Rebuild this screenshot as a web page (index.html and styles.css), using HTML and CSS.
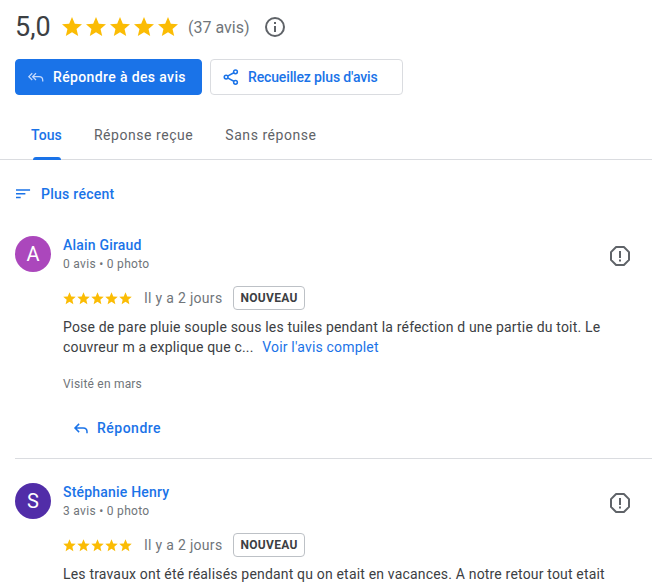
FILE: index.html
```html
<!DOCTYPE html>
<html lang="fr">
<head>
    <meta charset="UTF-8">
    <title>Avis</title>
    <link rel="stylesheet" href="styles.css">
</head>
<body>
    <svg class="defs" width="0" height="0">
        <symbol id="star" viewBox="0 0 24 24"><path d="M12 17.27 18.18 21l-1.64-7.03L22 9.24l-7.19-.61L12 2 9.19 8.63 2 9.24l5.46 4.73L5.82 21z"/></symbol>
        <symbol id="flag" viewBox="0 0 24 24"><path d="M8.1 3h7.8L21 8.1v7.8L15.9 21H8.1L3 15.9V8.1z" fill="none" stroke="currentColor" stroke-width="2" stroke-linejoin="round"/><path d="M11 7h2v7h-2zM11 15.500h2v2h-2z" fill="currentColor"/></symbol>
        <symbol id="reply" viewBox="0 0 24 24"><path d="M9.500 6.500 4 12l5.500 5.500M4.500 12H15c3 0 5 2 5 5v2" fill="none" stroke="currentColor" stroke-width="2"/></symbol>
    </svg>

    <div class="summary">
        <span class="score">5,0</span>
        <span class="stars big">
            <svg><use href="#star"/></svg><svg><use href="#star"/></svg><svg><use href="#star"/></svg><svg><use href="#star"/></svg><svg><use href="#star"/></svg>
        </span>
        <span class="count">(37 avis)</span>
        <svg class="info" viewBox="0 0 24 24"><circle cx="12" cy="12" r="9" fill="none" stroke="currentColor" stroke-width="2"/><path d="M11 11h2v6h-2zM11 7h2v2h-2z" fill="currentColor"/></svg>
    </div>

    <div class="actions">
        <button class="btn primary">
            <svg class="btn-icon" viewBox="0 0 24 24" fill="none" stroke="currentColor" stroke-width="1.700"><path d="M7 7 2.500 11.500 7 16M12 7l-4.500 4.500L12 16M8 11.500h8c3 0 5 2 5 5V18"/></svg>
            Répondre à des avis
        </button>
        <button class="btn outline">
            <svg class="btn-icon" viewBox="0 0 24 24" fill="none" stroke="currentColor" stroke-width="2"><circle cx="18" cy="5" r="2.500"/><circle cx="5.500" cy="12" r="2.500"/><circle cx="18" cy="19" r="2.500"/><path d="m8 10.600 7.800-4.300M8 13.400l7.800 4.300"/></svg>
            Recueillez plus d'avis
        </button>
    </div>

    <div class="tabs">
        <div class="tab active">Tous</div>
        <div class="tab">Réponse reçue</div>
        <div class="tab">Sans réponse</div>
    </div>

    <div class="sort">
        <svg class="sort-icon" viewBox="0 0 16 12" fill="currentColor"><path d="M0 1h15v1.500H0zM0 5h10v1.500H0zM0 9h5v1.500H0z"/></svg>
        Plus récent
    </div>

    <div class="review">
        <div class="author">
            <div class="avatar purple">A</div>
            <div class="author-info">
                <div class="name">Alain Giraud</div>
                <div class="meta">0 avis • 0 photo</div>
            </div>
            <svg class="flag"><use href="#flag"/></svg>
        </div>
        <div class="review-body">
            <div class="rating">
                <span class="stars small">
                    <svg><use href="#star"/></svg><svg><use href="#star"/></svg><svg><use href="#star"/></svg><svg><use href="#star"/></svg><svg><use href="#star"/></svg>
                </span>
                <span class="date">Il y a 2 jours</span>
                <span class="badge">NOUVEAU</span>
            </div>
            <p class="text">Pose de pare pluie souple sous les tuiles pendant la réfection d une partie du toit. Le couvreur m a explique que c... <a class="more">Voir l'avis complet</a></p>
            <div class="visited">Visité en mars</div>
            <div class="reply">
                <svg class="reply-icon"><use href="#reply"/></svg>
                Répondre
            </div>
        </div>
    </div>

    <div class="review">
        <div class="author">
            <div class="avatar indigo">S</div>
            <div class="author-info">
                <div class="name">Stéphanie Henry</div>
                <div class="meta">3 avis • 0 photo</div>
            </div>
            <svg class="flag"><use href="#flag"/></svg>
        </div>
        <div class="review-body">
            <div class="rating">
                <span class="stars small">
                    <svg><use href="#star"/></svg><svg><use href="#star"/></svg><svg><use href="#star"/></svg><svg><use href="#star"/></svg><svg><use href="#star"/></svg>
                </span>
                <span class="date">Il y a 2 jours</span>
                <span class="badge">NOUVEAU</span>
            </div>
            <p class="text">Les travaux ont été réalisés pendant qu on etait en vacances. A notre retour tout etait</p>
        </div>
    </div>
</body>
</html>
```

FILE: styles.css
```css
html, body {
    height: 100%;
    overflow: hidden;
}
body {
    margin: 0;
    font-family: Roboto, "Liberation Sans", sans-serif;
    color: #3c4043;
    background: #fff;
}
.defs {
    position: absolute;
}
.summary {
    display: flex;
    align-items: center;
    height: 30px;
    padding: 12px 0 0 15px;
}
.score {
    font-size: 27px;
    width: 45px;
}
.stars {
    display: flex;
    fill: #fbbc04;
}
.stars.big svg {
    width: 24px;
    height: 24px;
}
.stars.small {
    margin-left: -1px;
}
.stars.small svg {
    width: 15px;
    height: 15px;
    margin-right: -1px;
}
.count {
    font-size: 16px;
    color: #70757a;
    margin-left: 8px;
    width: 62px;
    white-space: nowrap;
}
.info {
    width: 24px;
    height: 24px;
    margin-left: 13px;
    color: #5f6368;
}
.actions {
    display: flex;
    gap: 8px;
    padding: 17px 0 0 15px;
}
.btn {
    display: flex;
    align-items: center;
    height: 36px;
    border-radius: 4px;
    font-family: inherit;
    font-size: 14px;
    font-weight: 500;
    padding: 0;
    box-sizing: border-box;
}
.btn-icon {
    width: 18px;
    height: 18px;
    margin-right: 8px;
}
.primary {
    width: 187px;
    padding-left: 11px;
    background: #1a73e8;
    border: 1px solid #1a73e8;
    color: #fff;
    letter-spacing: 0.37px;
}
.primary .btn-icon {
    color: #c6dafc;
}
.outline {
    width: 193px;
    padding-left: 11px;
    background: #fff;
    border: 1px solid #dadce0;
    color: #1a73e8;
    letter-spacing: -0.14px;
}
.tabs {
    display: flex;
    gap: 32px;
    height: 65px;
    box-sizing: border-box;
    border-bottom: 1px solid #dadce0;
    padding-left: 31px;
}
.tab {
    position: relative;
    font-size: 14px;
    line-height: 80px;
    color: #5f6368;
    letter-spacing: 0.55px;
}
.tab.active {
    color: #1a73e8;
    font-weight: 500;
    letter-spacing: 0.1px;
}
.tab.active::after {
    content: "";
    position: absolute;
    left: 2px;
    right: 1px;
    bottom: -1px;
    height: 3px;
    border-radius: 3px 3px 0 0;
    background: #1a73e8;
}
.sort {
    display: flex;
    align-items: center;
    gap: 10px;
    height: 20px;
    margin: 24px 0 32px 16px;
    font-size: 14px;
    font-weight: 500;
    color: #1a73e8;
    letter-spacing: 0.27px;
}
.sort-icon {
    width: 15px;
    height: 12px;
}
.review {
    margin-left: 15px;
    padding-bottom: 12px;
    border-bottom: 1px solid #dadce0;
    margin-bottom: 24px;
}
.review:last-child {
    border-bottom: 0;
    padding-bottom: 0;
    margin-bottom: 0;
}
.author {
    display: flex;
    align-items: center;
    height: 36px;
}
.avatar {
    width: 36px;
    height: 36px;
    border-radius: 50%;
    color: #fff;
    font-size: 20px;
    line-height: 36px;
    text-align: center;
}
.purple {
    background: #ab47bc;
}
.indigo {
    background: #512da8;
}
.author-info {
    flex: 1;
    margin-left: 12px;
}
.name {
    font-size: 14px;
    font-weight: 500;
    color: #1a73e8;
    line-height: 20px;
    letter-spacing: 0.2px;
}
.meta {
    font-size: 12px;
    color: #70757a;
    line-height: 18px;
    letter-spacing: 0.3px;
}
.flag {
    width: 24px;
    height: 24px;
    margin-top: 4px;
    margin-right: 20px;
    color: #5f6368;
}
.review-body {
    padding-left: 48px;
    padding-right: 30px;
}
.rating {
    display: flex;
    align-items: center;
    height: 24px;
    margin-top: 14px;
}
.date {
    font-size: 14px;
    color: #70757a;
    margin-left: 12px;
    letter-spacing: 0.3px;
}
.badge {
    margin-left: 11px;
    border: 1px solid #bdc1c6;
    border-radius: 4px;
    padding: 0 6px;
    font-size: 12px;
    font-weight: 700;
    line-height: 22px;
    color: #3c4043;
    letter-spacing: 0.3px;
}
.text {
    margin: 7px 0 0;
    font-size: 14px;
    line-height: 20px;
    letter-spacing: 0.18px;
}
.more {
    color: #1a73e8;
    margin-left: 5px;
}
.visited {
    font-size: 12px;
    color: #70757a;
    margin-top: 18px;
    line-height: 18px;
    letter-spacing: 0.2px;
}
.reply {
    display: flex;
    align-items: center;
    gap: 7px;
    height: 36px;
    margin-top: 17px;
    padding-left: 9px;
    font-size: 14px;
    font-weight: 500;
    color: #1a73e8;
    letter-spacing: 0.5px;
}
.reply-icon {
    width: 18px;
    height: 18px;
}
```
